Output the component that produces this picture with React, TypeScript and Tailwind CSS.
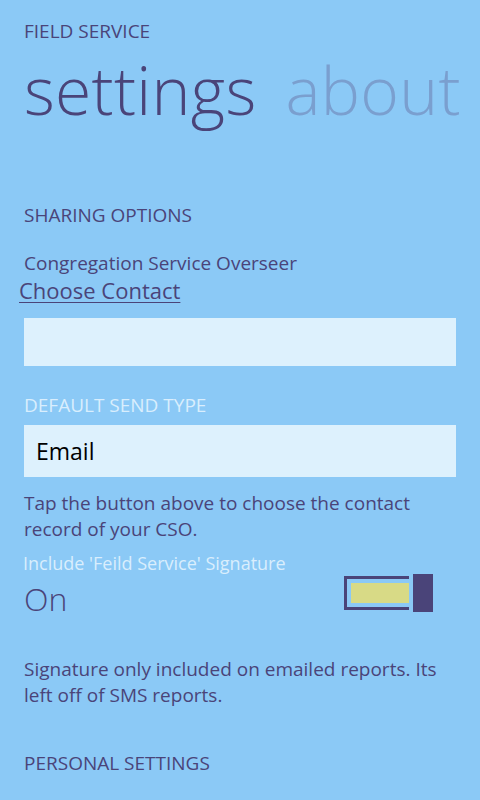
import React from "react";

export default function App() {
  return (
    <div className="w-[480px] h-[800px] overflow-hidden bg-[#8bc9f6] text-[#4a4479] [font-family:'Open_Sans',sans-serif]">
      {/* header */}
      <div className="pt-[18px] px-6">
        <div className="text-[19px] leading-[26px]">FIELD SERVICE</div>
        <div className="flex gap-[29px] mt-[10px] font-light text-[66px] leading-[70px] tracking-[0.3px] whitespace-nowrap">
          <span>settings</span>
          <span className="text-[#7a9fcf]">about</span>
        </div>
      </div>

      <div className="px-6 mt-[78px]">
        <div className="text-[19px] leading-[26px]">SHARING OPTIONS</div>

        <div className="mt-[22px] text-[19px] leading-[26px]">Congregation Service Overseer</div>
        <button className="-ml-[5px] -mt-[1px] text-[22px] leading-[30px] underline underline-offset-[3px] decoration-1">
          Choose Contact
        </button>
        <div className="mt-[13px] h-[48px] bg-[#ddf1fd]" />

        <div className="mt-[26px] text-[19px] leading-[26px] text-[#d9eefd]">DEFAULT SEND TYPE</div>
        <div className="mt-[7px] h-[52px] bg-[#ddf1fd] flex items-center px-3 text-[23px] text-black">
          Email
        </div>

        <p className="mt-[13px] text-[19px] leading-[26px] pr-6">
          Tap the button above to choose the contact record of your CSO.
        </p>

        <div className="mt-[9px] -ml-px text-[18px] leading-[24px] text-[#d9eefd]">
          Include 'Feild Service' Signature
        </div>
        <div className="flex items-start justify-between mt-[4px]">
          <span className="font-light text-[32px] leading-[40px]">On</span>
          <div className="flex items-center gap-[4px] mr-[23px] -mt-[5px]">
            <div className="w-[65px] h-[34px] border-l-[3px] border-y-[3px] border-[#4a4479] py-[4px] pl-[4px]">
              <div className="h-full bg-[#d8da86]" />
            </div>
            <div className="w-[20px] h-[38px] bg-[#4a4479]" />
          </div>
        </div>

        <p className="mt-[37px] text-[19px] leading-[26px]">
          Signature only included on emailed reports. Its left off of SMS reports.
        </p>

        <div className="mt-[42px] text-[19px] leading-[26px]">PERSONAL SETTINGS</div>
      </div>
    </div>
  );
}
